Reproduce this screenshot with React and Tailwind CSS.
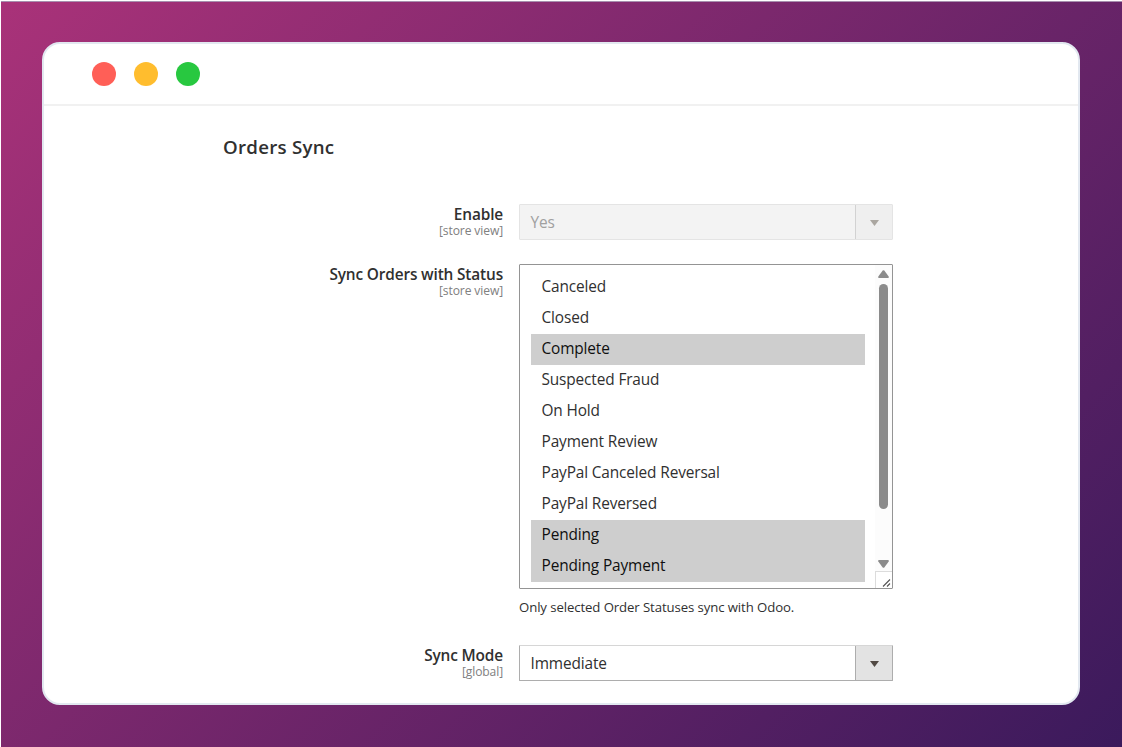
import React, { useState } from "react";

const statuses = [
  "Canceled", "Closed", "Complete", "Suspected Fraud", "On Hold",
  "Payment Review", "PayPal Canceled Reversal", "PayPal Reversed",
  "Pending", "Pending Payment",
];

function FieldLabel({ label, scope }) {
  return (
    <div className="w-[461px] shrink-0 pt-px pr-[2px] text-right">
      <div className="text-[15.4px] leading-[19px] font-semibold tracking-[-0.15px] text-[#303030]">{label}</div>
      <div className="text-[12.1px] leading-[14px] tracking-[-0.12px] text-[#808080]">{scope}</div>
    </div>
  );
}

function Select({ value, disabled }) {
  return (
    <div
      className={
        disabled
          ? "flex h-9 w-[374px] rounded-[1px] border border-[#e4e4e4] bg-[#f3f3f3] text-[#a0a0a0]"
          : "flex h-9 w-[374px] rounded-[1px] border border-[#adadad] border-t-[#d6d6d6] bg-white text-[#303030]"
      }
    >
      <div className="flex-1 pl-[10.5px] text-[15.4px] leading-[35px] tracking-[-0.13px]">{value}</div>
      <div
        className={
          disabled
            ? "flex w-[37px] items-center justify-center border-l border-[#d2d2d2] bg-[#efefef]"
            : "flex w-[37px] items-center justify-center border-l border-[#adadad] bg-[#e3e3e3]"
        }
      >
        <svg width="9" height="6" viewBox="0 0 9 6" className={disabled ? "mt-px fill-[#aaa6a0]" : "mt-px fill-[#514943]"}>
          <path d="M0 0h9L4.5 6z" />
        </svg>
      </div>
    </div>
  );
}

function App() {
  const [selected, setSelected] = useState(["Complete", "Pending", "Pending Payment"]);

  const toggle = (status) => {
    if (selected.includes(status)) {
      setSelected(selected.filter((s) => s !== status));
    } else {
      setSelected([...selected, status]);
    }
  };

  return (
    <div className="h-[747px] w-[1122px] bg-white pt-px pl-px font-['Open_Sans',sans-serif]">
      <div className="h-[746px] w-[1121px] border-t border-[#a78fae] bg-linear-[135deg,#a93279,#3b1a5c] pt-10 pl-[41px]">
        <div className="h-[663px] w-[1038px] overflow-hidden rounded-[18px] border-2 border-[#e2e8f0] bg-white">
          {/* Window bar */}
          <div className="flex h-[62px] items-center gap-[18px] border-b-2 border-[#f1f1f1] pl-12">
            <span className="size-6 rounded-full bg-[#ff5f57]" />
            <span className="size-6 rounded-full bg-[#ffbd2e]" />
            <span className="size-6 rounded-full bg-[#28c840]" />
          </div>

          <h2 className="mt-7 pl-[179px] text-[18.7px] leading-[26px] font-semibold tracking-[0.25px] text-[#303030]">
            Orders Sync
          </h2>

          <div className="mt-[44px] flex gap-[14px]">
            <FieldLabel label="Enable" scope="[store view]" />
            <Select value="Yes" disabled />
          </div>

          <div className="mt-6 flex gap-[14px]">
            <FieldLabel label="Sync Orders with Status" scope="[store view]" />
            <div>
              <div className="flex h-[325px] w-[374px] rounded-[1px] border border-[#949494] bg-white">
                <ul className="flex-1 pt-[7px] pr-[10px] pl-[11px] pb-[7px]">
                  {statuses.map((status) => (
                    <li
                      key={status}
                      onClick={() => toggle(status)}
                      className={
                        selected.includes(status)
                          ? "h-[31px] bg-[#cecece] pl-[10.5px] text-[15.4px] leading-[29px] tracking-[-0.13px] text-[#101010]"
                          : "h-[31px] pl-[10.5px] text-[15.4px] leading-[29px] tracking-[-0.13px] text-[#303030]"
                      }
                    >
                      {status}
                    </li>
                  ))}
                </ul>
                {/* Scrollbar */}
                <div className="flex w-[17px] flex-col items-center bg-[#fcfcfc]">
                  <svg width="11" height="8" viewBox="0 0 11 8" className="mt-[5px] fill-[#8b8b8b]">
                    <path d="M4.7.6Q5.5-.3 6.3.6L10.7 6.4Q11.2 8 10 8H1Q-.2 8 .3 6.4z" />
                  </svg>
                  <div className="mt-[6px] h-[225px] w-[9px] rounded-full bg-[#8b8b8b]" />
                  <svg width="11" height="8" viewBox="0 0 11 8" className="mt-auto mb-[3px] fill-[#8b8b8b]">
                    <path d="M4.7 7.4Q5.5 8.3 6.3 7.4L10.7 1.6Q11.2 0 10 0H1Q-.2 0 .3 1.6z" />
                  </svg>
                  <div className="flex h-[17px] w-full items-end justify-end border-t border-l border-[#dcdcdc] bg-white">
                    <svg width="10" height="10" viewBox="0 0 10 10" fill="none" stroke="#555" strokeWidth="1.1">
                      <path d="M1 8.5L8 1.5M5 8.5L8 5.5" />
                    </svg>
                  </div>
                </div>
              </div>
              <p className="mt-[9px] text-[13.2px] leading-[18px] tracking-[-0.1px] text-[#303030]">
                Only selected Order Statuses sync with Odoo.
              </p>
            </div>
          </div>

          <div className="mt-[29px] flex gap-[14px]">
            <FieldLabel label="Sync Mode" scope="[global]" />
            <Select value="Immediate" />
          </div>
        </div>
      </div>
    </div>
  );
}

export default App;
